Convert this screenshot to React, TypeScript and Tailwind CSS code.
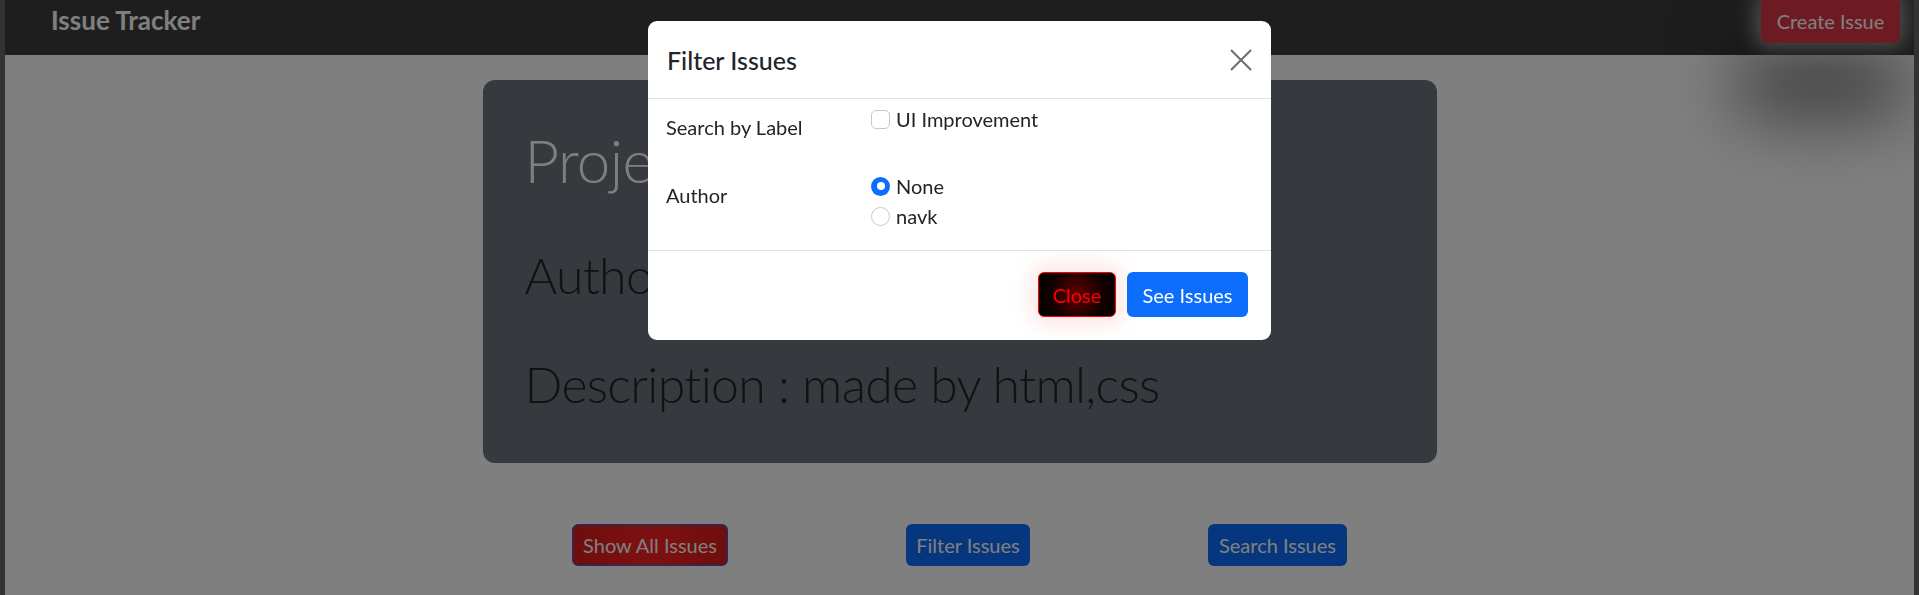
function Navbar() {
  return (
    <nav className="flex h-[55px] items-start justify-between bg-[#3e3c3e] pl-[46px] pr-[14px]">
      <span className="mt-[5px] text-[26px] font-bold leading-[30px] text-white">Issue Tracker</span>
      <button className="-mt-[2px] h-[45px] w-[139px] rounded-[7px] bg-[#dc3545] text-[20px] text-white shadow-[0_0_20px_6px_rgba(255,255,255,0.5),-10px_62px_70px_14px_rgba(0,0,0,0.5)]">
        Create Issue
      </button>
    </nav>
  );
}

function ProjectCard() {
  return (
    <div className="flex h-[383px] w-[954px] flex-col gap-[49px] rounded-[12px] bg-[#6c757d] pl-[42px] pt-[44px] font-light">
      <h1 className="text-[60px] leading-[72px] tracking-[-0.6px] text-white">Project Name : Issue Tracker</h1>
      <p className="text-[50px] leading-[60px] tracking-[-0.7px] text-[#212529]">Author : navk</p>
      <p className="text-[50px] leading-[60px] tracking-[-0.7px] text-[#212529]">Description : made by html,css</p>
    </div>
  );
}

function ActionButtons() {
  return (
    <div className="mt-[61px] flex justify-center gap-[178px] text-[20px] text-white">
      <button className="h-[42px] w-[156px] rounded-[6px] border border-[#0d6efd] bg-[radial-gradient(circle,#ff2222_0%,#dc1c1c_100%)]">
        Show All Issues
      </button>
      <button className="h-[42px] w-[124px] rounded-[6px] bg-[#0d6efd]">Filter Issues</button>
      <button className="h-[42px] w-[139px] rounded-[6px] bg-[#0d6efd]">Search Issues</button>
    </div>
  );
}

function CloseIcon() {
  return (
    <svg width="22" height="22" viewBox="0 0 22 22" className="text-[#6e6e6e]">
      <path d="M1 1L21 21M21 1L1 21" stroke="currentColor" strokeWidth="2" fill="none" />
    </svg>
  );
}

function FilterModal() {
  return (
    <div className="fixed inset-0 flex justify-center pt-[21px]">
      <div className="h-[319px] w-[623px] rounded-[9px] bg-white text-[20px] text-[#212529]">
        <div className="flex h-[78px] items-center justify-between border-b border-[#dee2e6] pl-[19px] pr-[19px]">
          <h5 className="text-[25px] font-medium leading-[30px]">Filter Issues</h5>
          <CloseIcon />
        </div>

        <div className="px-[18px] pb-[19px] pt-[5px] leading-[30px]">
          <div className="mb-[29px] flex">
            <div className="w-[205px] pt-[8px]">Search by Label</div>
            <div className="flex h-[30px] items-center gap-[6px]">
              <span className="h-[19px] w-[19px] rounded-[5px] border border-[#c5c9cd] bg-white" />
              <span>UI Improvement</span>
            </div>
          </div>
          <div className="flex">
            <div className="w-[205px] pt-[9px]">Author</div>
            <div className="flex flex-col">
              <div className="flex h-[30px] items-center gap-[6px]">
                <span className="flex h-[19px] w-[19px] items-center justify-center rounded-full bg-[#0d6efd]">
                  <span className="h-[8px] w-[8px] rounded-full bg-white" />
                </span>
                <span>None</span>
              </div>
              <div className="flex h-[30px] items-center gap-[6px]">
                <span className="h-[19px] w-[19px] rounded-full border border-[#c5c9cd] bg-white" />
                <span>navk</span>
              </div>
            </div>
          </div>
        </div>

        <div className="flex justify-end gap-[11px] border-t border-[#dee2e6] pr-[23px] pt-[21px]">
          <button className="h-[45px] w-[78px] rounded-[6px] border border-[#ff0000] bg-[radial-gradient(circle,#650000_0%,#140000_60%,#000000_100%)] text-[20px] text-[#ff0000] shadow-[0_0_22px_6px_rgba(255,0,0,0.12)]">
            Close
          </button>
          <button className="h-[45px] w-[121px] rounded-[6px] bg-[#0d6efd] text-[20px] text-white">See Issues</button>
        </div>
      </div>
    </div>
  );
}

export default function App() {
  return (
    <div className="min-h-[595px] overflow-hidden border-x-[5px] border-[#666666] bg-white font-['Lato',sans-serif]">
      <Navbar />
      <main className="flex flex-col items-center pt-[25px]">
        <ProjectCard />
        <ActionButtons />
      </main>
      <div className="fixed inset-0 bg-black/50" />
      <FilterModal />
    </div>
  );
}
